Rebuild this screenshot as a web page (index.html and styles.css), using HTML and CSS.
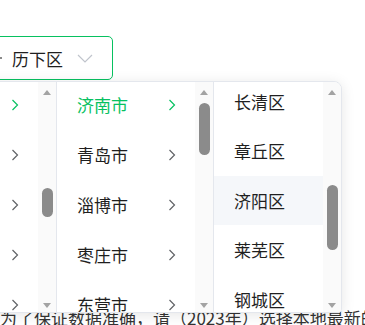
FILE: index.html
```html
<!DOCTYPE html>
<html lang="zh-CN">
<head>
  <meta charset="UTF-8">
  <title>地区选择</title>
  <link rel="stylesheet" href="styles.css">
</head>
<body>

  <div class="page">
    <div class="picker">
      <div class="input">
        <span class="path">山东省 / 济南市</span>
        <span class="dot"></span>
        <span class="value">历下区</span>
        <svg class="caret" width="16" height="9" viewBox="0 0 16 9"><polyline points="1,1 8,8 15,1" fill="none" stroke="currentColor" stroke-width="1.2"/></svg>
      </div>

      <div class="menu">
        <div class="col col-prov">
          <div class="list">
            <ul class="items">
              <li class="item active"><span>山东省</span><svg width="8" height="12" viewBox="0 0 8 12"><polyline points="1.5,1 6.5,6 1.5,11" fill="none" stroke="currentColor" stroke-width="1.2"/></svg></li>
              <li class="item"><span>河南省</span><svg width="8" height="12" viewBox="0 0 8 12"><polyline points="1.5,1 6.5,6 1.5,11" fill="none" stroke="currentColor" stroke-width="1.2"/></svg></li>
              <li class="item"><span>湖北省</span><svg width="8" height="12" viewBox="0 0 8 12"><polyline points="1.5,1 6.5,6 1.5,11" fill="none" stroke="currentColor" stroke-width="1.2"/></svg></li>
              <li class="item"><span>湖南省</span><svg width="8" height="12" viewBox="0 0 8 12"><polyline points="1.5,1 6.5,6 1.5,11" fill="none" stroke="currentColor" stroke-width="1.2"/></svg></li>
              <li class="item"><span>广东省</span><svg width="8" height="12" viewBox="0 0 8 12"><polyline points="1.5,1 6.5,6 1.5,11" fill="none" stroke="currentColor" stroke-width="1.2"/></svg></li>
            </ul>
          </div>
          <div class="bar">
            <span class="up"></span>
            <span class="thumb" style="margin-top: 93px; height: 29px"></span>
            <span class="fill"></span>
            <span class="down"></span>
          </div>
        </div>

        <div class="col col-city">
          <div class="list">
            <ul class="items">
              <li class="item active"><span>济南市</span><svg width="8" height="12" viewBox="0 0 8 12"><polyline points="1.5,1 6.5,6 1.5,11" fill="none" stroke="currentColor" stroke-width="1.2"/></svg></li>
              <li class="item"><span>青岛市</span><svg width="8" height="12" viewBox="0 0 8 12"><polyline points="1.5,1 6.5,6 1.5,11" fill="none" stroke="currentColor" stroke-width="1.2"/></svg></li>
              <li class="item"><span>淄博市</span><svg width="8" height="12" viewBox="0 0 8 12"><polyline points="1.5,1 6.5,6 1.5,11" fill="none" stroke="currentColor" stroke-width="1.2"/></svg></li>
              <li class="item"><span>枣庄市</span><svg width="8" height="12" viewBox="0 0 8 12"><polyline points="1.5,1 6.5,6 1.5,11" fill="none" stroke="currentColor" stroke-width="1.2"/></svg></li>
              <li class="item"><span>东营市</span><svg width="8" height="12" viewBox="0 0 8 12"><polyline points="1.5,1 6.5,6 1.5,11" fill="none" stroke="currentColor" stroke-width="1.2"/></svg></li>
            </ul>
          </div>
          <div class="bar">
            <span class="up"></span>
            <span class="thumb" style="margin-top: 8px; height: 52px"></span>
            <span class="fill"></span>
            <span class="down"></span>
          </div>
        </div>

        <div class="col col-area">
          <div class="list">
            <ul class="items">
              <li class="item"><span>长清区</span></li>
              <li class="item"><span>章丘区</span></li>
              <li class="item hover"><span>济阳区</span></li>
              <li class="item"><span>莱芜区</span></li>
              <li class="item"><span>钢城区</span></li>
            </ul>
          </div>
          <div class="bar">
            <span class="up"></span>
            <span class="thumb" style="margin-top: 90px; height: 65px"></span>
            <span class="fill"></span>
            <span class="down"></span>
          </div>
        </div>
      </div>
    </div>

    <p class="note">为了保证数据准确，请（2023年）选择本地最新的</p>
  </div>

</body>
</html>
```

FILE: styles.css
```css
body {
  margin: 0;
  background: #fff;
  font-family: "Noto Sans CJK SC", "Noto Sans", sans-serif;
  color: #1f1f1f;
  overflow: hidden;
}

.page {
  padding-top: 36px;
}

.picker {
  position: relative;
}

.input {
  width: 300px;
  height: 44px;
  margin-left: -187px;
  border: 1px solid #07c160;
  border-radius: 5px;
  display: flex;
  align-items: center;
  justify-content: flex-end;
  padding-right: 19px;
  box-sizing: border-box;
  overflow: hidden;
  font-size: 17px;
  white-space: nowrap;
}

.path {
  margin-right: 14px;
}

.dot {
  width: 2px;
  height: 2px;
  background: #8a8a8a;
  margin-right: 10px;
}

.caret {
  color: #c0c4cc;
  margin-left: 14px;
}

/* dropdown */
.menu {
  position: absolute;
  top: 45px;
  left: -124px;
  height: 230px;
  display: flex;
  background: #fff;
  border: 1px solid #e4e7ed;
  border-radius: 4px 8px 4px 4px;
  box-shadow: 0 2px 14px rgba(0, 0, 0, 0.1);
  overflow: hidden;
}

.col {
  display: flex;
  border-right: 1px solid #e4e7ed;
}

.col-prov { width: 179px; }
.col-city { width: 156px; }
.col-area { width: 127px; border-right: none; }

.list {
  flex: 1;
  overflow: hidden;
}

.items {
  list-style: none;
  margin: -2px 0 0;
  padding: 0;
}

.col-area .items {
  margin-top: -5.5px;
}

.item {
  height: 50px;
  line-height: 50px;
  padding: 0 19px 0 20px;
  display: flex;
  align-items: center;
  justify-content: space-between;
  font-size: 17px;
  white-space: nowrap;
}

.col-area .item {
  height: 49.5px;
  line-height: 49.5px;
}

.item svg {
  color: #606266;
  flex-shrink: 0;
}

.item.active,
.item.active svg {
  color: #07c160;
}

.item.hover {
  background: #f5f7fa;
}

/* scrollbar */
.bar {
  width: 18px;
  background: #fafafa;
  display: flex;
  flex-direction: column;
  align-items: center;
}

.up,
.down {
  width: 0;
  height: 0;
  border-left: 4px solid transparent;
  border-right: 4px solid transparent;
}

.up {
  margin-top: 8px;
  border-bottom: 5px solid #a3a3a3;
}

.down {
  margin-bottom: 4px;
  border-top: 5px solid #a3a3a3;
}

.thumb {
  width: 11px;
  border-radius: 6px;
  background: #8b8b8b;
}

.fill {
  flex: 1;
}

.note {
  margin: 228px 0 0;
  width: 362px;
  text-align: right;
  font-size: 17px;
  line-height: 20px;
  white-space: nowrap;
  color: #333;
}
```
